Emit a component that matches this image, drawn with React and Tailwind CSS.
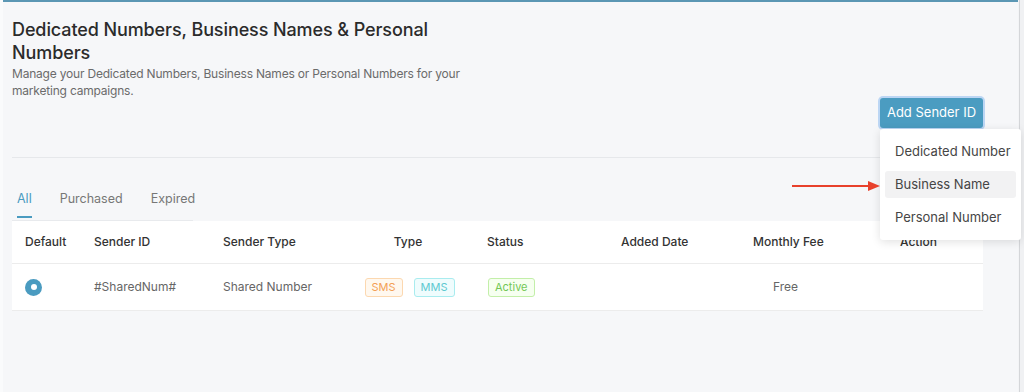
import React from "react";

const font = { fontFamily: "Inter, 'Noto Sans', sans-serif" };

function Badge({ children, cls }) {
  return (
    <span className={`inline-flex h-[19px] items-center rounded-[3px] border px-[6px] text-[11px] leading-none ${cls}`}>
      {children}
    </span>
  );
}

export default function App() {
  return (
    <div className="relative flex h-[392px] w-[1024px] overflow-hidden bg-[#f6f7f9]" style={font}>
      <div className="w-[3px] shrink-0 bg-[#fafbfc]" />
      <div className="flex w-[1015px] shrink-0 flex-col border-t-2 border-[#5b97b4] pl-[9px] pr-[35px]">
        <div className="w-[460px] pt-[16px]">
          <h1 className="text-[18px] font-medium leading-[23px] tracking-[-0.1px] text-[#2b2b2b]">
            Dedicated Numbers, Business Names &amp; Personal Numbers
          </h1>
          <p className="mt-[1px] text-[12px] leading-[17px] tracking-[-0.2px] text-[#6b6b6b]">
            Manage your Dedicated Numbers, Business Names or Personal Numbers for your marketing campaigns.
          </p>
        </div>
        <div className="mt-[-1px] flex justify-end">
          <div className="relative">
            <button className="flex h-[30px] w-[103px] items-center justify-center rounded-[3px] bg-[#4b9cc1] text-[13px] text-white ring-2 ring-[#bcd6f4]">
              Add Sender ID
            </button>
          </div>
        </div>
        <div className="mt-[29px] h-px bg-[#e6e8eb]" />
        <div className="mt-[31px] flex w-[181px] gap-[28px] border-b border-[#e8eaed] pb-[2px] pl-[5px]">
          <div className="flex flex-col">
            <span className="text-[12.5px] leading-[20px] text-[#4a9bc0]">All</span>
            <span className="mt-[7px] h-[2px] bg-[#4a9bc0]" />
          </div>
          <span className="text-[12.5px] leading-[20px] text-[#777]">Purchased</span>
          <span className="text-[12.5px] leading-[20px] text-[#777]">Expired</span>
        </div>
        <div className="bg-white">
          <div className="grid h-[43px] grid-cols-[70px_129px_130px_134px_134px_132px_106px_1fr] items-center border-b border-[#ececec] text-[12px] font-medium text-[#333]">
            <div className="pl-[13px]">Default</div>
            <div className="pl-[12px]">Sender ID</div>
            <div className="pl-[12px]">Sender Type</div>
            <div className="text-center">Type</div>
            <div className="pl-[12px]">Status</div>
            <div className="pl-[12px]">Added Date</div>
            <div className="pl-[12px]">Monthly Fee</div>
            <div className="pl-[53px]">Action</div>
          </div>
          <div className="grid h-[47px] grid-cols-[70px_129px_130px_134px_134px_132px_106px_1fr] items-center border-b border-[#ececec] text-[12px] text-[#666]">
            <div className="pl-[13px]">
              <span className="flex h-[17px] w-[17px] items-center justify-center rounded-full bg-[#4a9bc0]">
                <span className="h-[6px] w-[6px] rounded-full bg-white" />
              </span>
            </div>
            <div className="pl-[12px]">#SharedNum#</div>
            <div className="pl-[12px]">Shared Number</div>
            <div className="flex justify-center gap-[11px] pl-[3px]">
              <Badge cls="border-[#fcd8b0] bg-[#fff8ef] text-[#f3a055]">SMS</Badge>
              <Badge cls="border-[#a9ecef] bg-[#effcfd] text-[#5dc9d0]">MMS</Badge>
            </div>
            <div className="pl-[13px]">
              <Badge cls="border-[#c3efa9] bg-[#f6fff0] text-[#72c755]">Active</Badge>
            </div>
            <div />
            <div className="pl-[32px]">Free</div>
            <div />
          </div>
        </div>
      </div>
      <div className="flex-1 bg-[#f3f4f6]" />
      <div className="w-px bg-[#d4d6d9]" />
      <div className="w-[4px] bg-[#f0f1f3]" />

      {/* dropdown menu */}
      <div className="absolute left-[880px] top-[129px] w-[141px] rounded-[3px] bg-white px-[5px] pb-[9px] pt-[9px] shadow-[0_2px_10px_rgba(0,0,0,0.12)]">
        <div className="flex flex-col gap-[6px] text-[13px] text-[#454545]">
          <div className="flex h-[27px] items-center rounded-[3px] pl-[10px]">Dedicated Number</div>
          <div className="flex h-[27px] items-center rounded-[3px] bg-[#f2f2f3] pl-[10px]">Business Name</div>
          <div className="flex h-[27px] items-center rounded-[3px] pl-[10px]">Personal Number</div>
        </div>
      </div>

      {/* annotation arrow */}
      <svg className="absolute left-[790px] top-[179px]" width="92" height="14" viewBox="0 0 92 14">
        <line x1="2" y1="7" x2="80" y2="7" stroke="#e8412c" strokeWidth="2" />
        <polygon points="78,2 90,7 78,12" fill="#e8412c" />
      </svg>
    </div>
  );
}
